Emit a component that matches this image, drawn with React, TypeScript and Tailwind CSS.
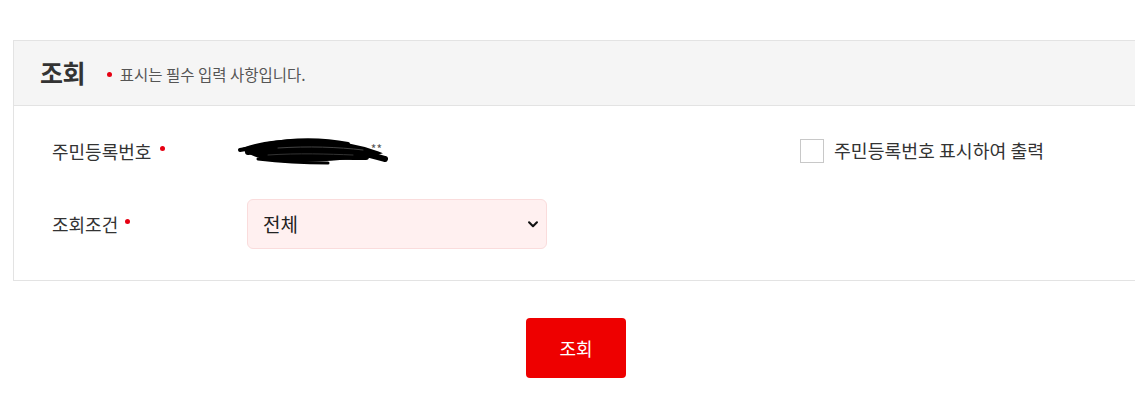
import React from "react";

const font = { fontFamily: '"Noto Sans CJK KR", "Noto Sans", sans-serif' };

function RequiredDot({ className = "" }: { className?: string }) {
  return <span className={"inline-block w-[5px] h-[5px] rounded-full bg-[#e60012] " + className} />;
}

function Scribble() {
  // redacted value: handwritten black scribble over the masked number
  return (
    <div className="relative w-[150px] h-[28px]">
      <span className="absolute right-[6px] top-[6px] text-[12px] text-[#555] leading-none">**</span>
      <svg width="150" height="28" viewBox="0 0 150 28" className="absolute inset-0" fill="none" stroke="#000" strokeLinecap="round">
        <path d="M6 12 C25 5, 50 3, 75 4 C100 5, 122 9, 140 16 C120 21, 90 23, 50 24 C30 23, 15 19, 6 12 Z" fill="#000" strokeWidth="3" />
        <path d="M2 13 L20 10" strokeWidth="4" />
        <path d="M10 15 C40 12, 80 12, 120 16 C130 17, 140 20, 147 22" strokeWidth="6" />
        <path d="M20 22 C45 25, 70 26, 90 26" strokeWidth="3" />
        <path d="M30 7 C55 2, 85 2, 110 7" strokeWidth="4" />
        <path d="M60 20 C80 19, 100 20, 128 20" strokeWidth="6" />
        <path d="M40 11 C70 9, 100 10, 125 13" stroke="#444" strokeWidth="1" />
        <path d="M30 18 C60 16, 90 17, 115 18" stroke="#333" strokeWidth="1" />
      </svg>
    </div>
  );
}

export default function App() {
  return (
    <div className="w-[1135px] h-[416px] overflow-hidden bg-white text-[#333]" style={font}>
      <div className="pt-[40px] pl-[13px]">
        <div className="w-[1140px] border border-[#e3e3e3]">
          {/* header */}
          <div className="h-[65px] bg-[#f5f5f5] border-b border-[#e3e3e3] flex items-center pl-[26px]">
            <h2 className="text-[25px] font-bold text-[#333] tracking-tight">조회</h2>
            <div className="ml-[22px] mt-[3px] flex items-center gap-[8px]">
              <RequiredDot />
              <span className="text-[15.5px] text-[#555]">표시는 필수 입력 사항입니다.</span>
            </div>
          </div>

          {/* body */}
          <div className="pl-[38px] pt-[31px] pb-[31px] flex flex-col gap-[34px]">
            <div className="flex items-center h-[28px]">
              <div className="w-[186px] flex items-center gap-[9px]">
                <span className="text-[18px]">주민등록번호</span>
                <RequiredDot className="-mt-[5px]" />
              </div>
              <Scribble />
              <label className="ml-[412px] flex items-center gap-[10px]">
                <span className="w-[24px] h-[24px] border border-[#c8c8c8] bg-white" />
                <span className="text-[18.3px]">주민등록번호 표시하여 출력</span>
              </label>
            </div>

            <div className="flex items-center">
              <div className="w-[195px] flex items-center gap-[7px]">
                <span className="text-[18px]">조회조건</span>
                <RequiredDot className="-mt-[5px]" />
              </div>
              <div className="w-[300px] h-[50px] rounded-[6px] border border-[#fadcdc] bg-[#fff0f0] flex items-center justify-between pl-[15px] pr-[6px]">
                <span className="text-[19px] text-[#222]">전체</span>
                <svg width="14" height="14" viewBox="0 0 16 16" fill="none" stroke="#111" strokeWidth="2.4" strokeLinecap="round" strokeLinejoin="round">
                  <path d="M3.5 6L8 10.5L12.5 6" />
                </svg>
              </div>
            </div>
          </div>
        </div>
      </div>

      <div className="flex justify-center pt-[37px] pl-[17px]">
        <button className="w-[100px] h-[60px] rounded-[4px] bg-[#ee0000] text-white text-[18px]">조회</button>
      </div>
    </div>
  );
}
